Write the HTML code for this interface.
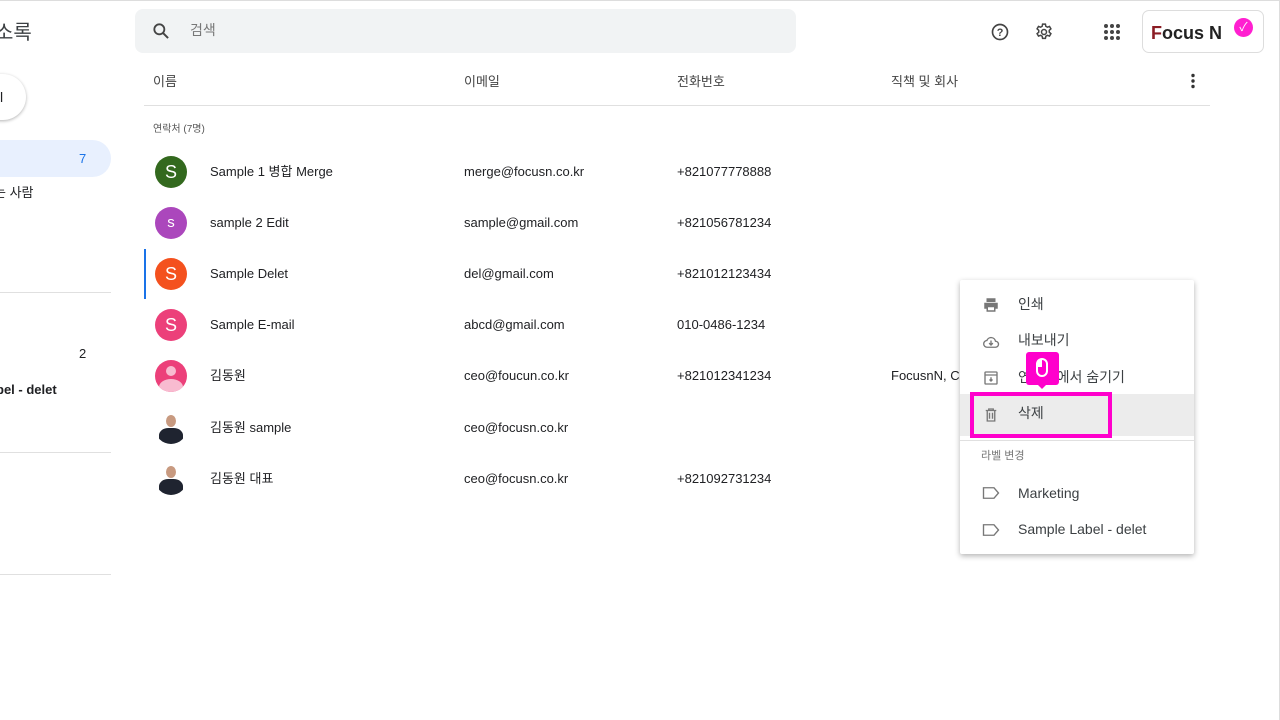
<!DOCTYPE html>
<html><head><meta charset="utf-8"><style>
*{margin:0;padding:0;box-sizing:border-box}
body{width:1280px;height:720px;overflow:hidden;background:#fff;font-family:"Liberation Sans","Noto Sans CJK KR",sans-serif;color:#202124;position:relative;border-top:1px solid #ddd;border-right:1px solid #ddd}
.a{position:absolute;white-space:nowrap;line-height:16px}
.av{position:absolute;left:155px;width:32px;height:32px;border-radius:50%;color:#fff;font-size:18px;text-align:center;line-height:32px}
.r{font-size:13px}
</style></head><body>
<div class="a" style="left:-5px;top:20px;font-size:20px;line-height:24px;color:#3c4043">소록</div>
<div class="a" style="left:-30px;top:73px;width:56px;height:46px;border-radius:23px;background:#fff;box-shadow:0 1px 3px rgba(0,0,0,.3)"></div>
<div class="a" style="left:0;top:88px;font-size:14px">l</div>
<div class="a" style="left:0;top:139px;width:111px;height:37px;background:#e8f0fe;border-radius:0 19px 19px 0"></div>
<div class="a" style="left:79px;top:150px;font-size:13px;color:#1a73e8">7</div>
<div class="a" style="left:-6px;top:184px;font-size:13px">는 사람</div>
<div class="a" style="left:0;top:291px;width:111px;height:1px;background:#e0e0e0"></div>
<div class="a" style="left:79px;top:345px;font-size:13px">2</div>
<div class="a" style="left:-4px;top:381px;font-size:13px;font-weight:bold">bel - delet</div>
<div class="a" style="left:0;top:451px;width:111px;height:1px;background:#e0e0e0"></div>
<div class="a" style="left:0;top:573px;width:111px;height:1px;background:#e0e0e0"></div>

<div class="a" style="left:135px;top:8px;width:661px;height:44px;background:#f1f3f4;border-radius:8px"></div>
<svg class="a" style="left:151px;top:20px" width="20" height="20" viewBox="0 0 24 24"><circle cx="10" cy="10" r="6" fill="none" stroke="#444" stroke-width="2.2"/><path d="M14.5 14.5l6 6" stroke="#444" stroke-width="2.4"/></svg>
<div class="a" style="left:190px;top:21px;font-size:14px;color:#777">검색</div>
<svg class="a" style="left:990px;top:21px" width="20" height="20" viewBox="0 0 24 24"><circle cx="12" cy="12" r="9" fill="none" stroke="#444" stroke-width="2"/><text x="12" y="17" font-size="13" text-anchor="middle" fill="#444" font-family="Liberation Sans" font-weight="bold">?</text></svg>
<svg class="a" style="left:1034px;top:21px" width="20" height="20" viewBox="0 0 24 24" fill="none" stroke="#444" stroke-width="1.8"><path d="M10.3 2.5h3.4l.5 2.6 1.9 1.1 2.5-.9 1.7 2.9-2 1.8v2.2l2 1.8-1.7 2.9-2.5-.9-1.9 1.1-.5 2.6h-3.4l-.5-2.6-1.9-1.1-2.5.9-1.7-2.9 2-1.8v-2.2l-2-1.8 1.7-2.9 2.5.9 1.9-1.1z"/><circle cx="12" cy="12" r="3"/></svg>
<svg class="a" style="left:1103px;top:22px" width="18" height="18" viewBox="0 0 18 18" fill="#444"><circle cx="3" cy="3" r="2"/><circle cx="9" cy="3" r="2"/><circle cx="15" cy="3" r="2"/><circle cx="3" cy="9" r="2"/><circle cx="9" cy="9" r="2"/><circle cx="15" cy="9" r="2"/><circle cx="3" cy="15" r="2"/><circle cx="9" cy="15" r="2"/><circle cx="15" cy="15" r="2"/></svg>
<div class="a" style="left:1142px;top:9px;width:122px;height:43px;border:1px solid #ddd;border-radius:7px"></div>
<div class="a" style="left:1151px;top:22px;font-size:18px;line-height:20px;font-weight:bold;color:#222"><span style="color:#8b1c24">F</span>ocus N</div>
<div class="a" style="left:1234px;top:17px;width:19px;height:19px;border-radius:50%;background:#ff1fd0;color:#fff;font-size:12px;text-align:center;line-height:19px">✓</div>

<div class="a" style="left:153px;top:73px;font-size:13px;color:#444">이름</div>
<div class="a" style="left:464px;top:73px;font-size:13px;color:#444">이메일</div>
<div class="a" style="left:677px;top:73px;font-size:13px;color:#444">전화번호</div>
<div class="a" style="left:891px;top:73px;font-size:13px;color:#444">직책 및 회사</div>
<svg class="a" style="left:1190px;top:72px" width="6" height="16" viewBox="0 0 6 16" fill="#333"><circle cx="3" cy="2.5" r="1.7"/><circle cx="3" cy="8" r="1.7"/><circle cx="3" cy="13.5" r="1.7"/></svg>
<div class="a" style="left:144px;top:104px;width:1066px;height:1px;background:#e0e0e0"></div>
<div class="a" style="left:153px;top:121px;font-size:10px;color:#555">연락처 (7명)</div>
<div class="a" style="left:144px;top:248px;width:2px;height:50px;background:#1a73e8"></div>

<div class="av" style="top:155px;background:#33691e">S</div>
<div class="av" style="top:206px;background:#ab47bc;font-size:15px">s</div>
<div class="av" style="top:257px;background:#f4511e">S</div>
<div class="av" style="top:308px;background:#ec407a">S</div>
<div class="av" style="top:359px;background:#ec407a;overflow:hidden"><div style="position:absolute;left:11px;top:6px;width:10px;height:10px;border-radius:50%;background:#f8bbd0"></div><div style="position:absolute;left:4px;top:19px;width:24px;height:16px;border-radius:50%;background:#f8bbd0"></div></div>
<div class="av" style="top:411px;background:#fff;overflow:hidden"><div style="position:absolute;left:11px;top:3px;width:10px;height:12px;border-radius:50%;background:#c89a80"></div><div style="position:absolute;left:4px;top:16px;width:24px;height:18px;border-radius:40% 40% 0 0;background:#1f2430"></div></div>
<div class="av" style="top:462px;background:#fff;overflow:hidden"><div style="position:absolute;left:11px;top:3px;width:10px;height:12px;border-radius:50%;background:#c89a80"></div><div style="position:absolute;left:4px;top:16px;width:24px;height:18px;border-radius:40% 40% 0 0;background:#1f2430"></div></div>

<div class="a r" style="left:210px;top:163px">Sample 1 병합 Merge</div>
<div class="a r" style="left:210px;top:214px">sample 2 Edit</div>
<div class="a r" style="left:210px;top:265px">Sample Delet</div>
<div class="a r" style="left:210px;top:316px">Sample E-mail</div>
<div class="a r" style="left:210px;top:367px">김동원</div>
<div class="a r" style="left:210px;top:419px">김동원 sample</div>
<div class="a r" style="left:210px;top:470px">김동원 대표</div>
<div class="a r" style="left:464px;top:163px">merge@focusn.co.kr</div>
<div class="a r" style="left:464px;top:214px">sample@gmail.com</div>
<div class="a r" style="left:464px;top:265px">del@gmail.com</div>
<div class="a r" style="left:464px;top:316px">abcd@gmail.com</div>
<div class="a r" style="left:464px;top:367px">ceo@foucun.co.kr</div>
<div class="a r" style="left:464px;top:419px">ceo@focusn.co.kr</div>
<div class="a r" style="left:464px;top:470px">ceo@focusn.co.kr</div>
<div class="a r" style="left:677px;top:163px">+821077778888</div>
<div class="a r" style="left:677px;top:214px">+821056781234</div>
<div class="a r" style="left:677px;top:265px">+821012123434</div>
<div class="a r" style="left:677px;top:316px">010-0486-1234</div>
<div class="a r" style="left:677px;top:367px">+821012341234</div>
<div class="a r" style="left:677px;top:470px">+821092731234</div>
<div class="a r" style="left:891px;top:367px">FocusnN, Co</div>

<div class="a" style="left:960px;top:279px;width:234px;height:274px;background:#fff;box-shadow:0 2px 6px rgba(0,0,0,.3);border-radius:2px"></div>
<div class="a" style="left:960px;top:393px;width:234px;height:42px;background:#ececec"></div>
<div class="a" style="left:960px;top:439px;width:234px;height:1px;background:#e0e0e0"></div>
<svg class="a" style="left:982px;top:295px" width="18" height="18" viewBox="0 0 24 24" fill="#777"><path d="M6 3h12v5H6zM3 9h18v8h-3v4H6v-4H3zM8 15v4h8v-4z"/></svg>
<svg class="a" style="left:981px;top:332px" width="20" height="18" viewBox="0 0 24 24" fill="none" stroke="#777" stroke-width="1.8"><path d="M7 19h11a4 4 0 0 0 0-8 6 6 0 0 0-11.5-1A4.5 4.5 0 0 0 7 19z"/><path d="M12 10v6M9.5 13.5l2.5 2.5 2.5-2.5"/></svg>
<svg class="a" style="left:982px;top:368px" width="18" height="18" viewBox="0 0 24 24" fill="none" stroke="#777" stroke-width="1.8"><rect x="4" y="4" width="16" height="16" rx="1"/><path d="M4 8h16M12 11v5M10 14l2 2 2-2"/></svg>
<svg class="a" style="left:982px;top:405px" width="18" height="18" viewBox="0 0 24 24" fill="none" stroke="#777" stroke-width="1.8"><path d="M5 6h14M9 6V4h6v2M7 6v14h10V6M10 9v8M14 9v8"/></svg>
<svg class="a" style="left:982px;top:485px" width="18" height="14" viewBox="0 0 24 18" fill="none" stroke="#777" stroke-width="1.8"><path d="M2 2h14l6 7-6 7H2z"/></svg>
<svg class="a" style="left:982px;top:522px" width="18" height="14" viewBox="0 0 24 18" fill="none" stroke="#777" stroke-width="1.8"><path d="M2 2h14l6 7-6 7H2z"/></svg>
<div class="a" style="left:1018px;top:295px;font-size:14px;color:#3c4043">인쇄</div>
<div class="a" style="left:1018px;top:331px;font-size:14px;color:#3c4043">내보내기</div>
<div class="a" style="left:1018px;top:368px;font-size:14px;color:#3c4043">연락처에서 숨기기</div>
<div class="a" style="left:1018px;top:404px;font-size:14px;color:#3c4043">삭제</div>
<div class="a" style="left:981px;top:447px;font-size:11px;color:#777">라벨 변경</div>
<div class="a" style="left:1018px;top:484px;font-size:14px;color:#3c4043">Marketing</div>
<div class="a" style="left:1018px;top:520px;font-size:14px;color:#3c4043">Sample Label - delet</div>
<div class="a" style="left:970px;top:391px;width:142px;height:46px;border:4px solid #ff00cc"></div>
<div class="a" style="left:1026px;top:351px;width:33px;height:33px;background:#ff00cc;border-radius:3px"></div>
<div class="a" style="left:1036px;top:382px;width:0;height:0;border-left:6px solid transparent;border-right:6px solid transparent;border-top:6px solid #ff00cc"></div>
<div class="a" style="left:1036px;top:357px;width:12px;height:19px;border:2px solid #fff;border-radius:6px"></div>
<div class="a" style="left:1037px;top:358px;width:5px;height:8px;background:#fff;border-radius:4px 0 0 0"></div>
</body></html>
